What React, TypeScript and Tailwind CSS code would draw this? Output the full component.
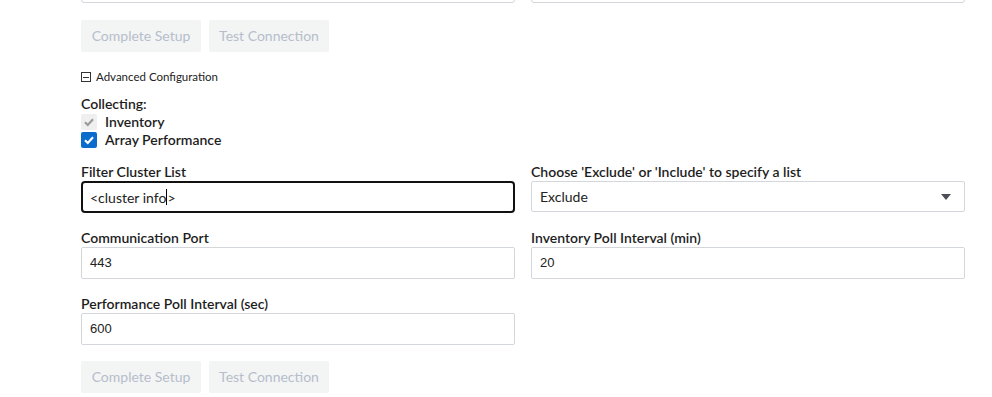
import React from "react";

const font = { fontFamily: "Lato, 'Open Sans', sans-serif" };

function Btns() {
  return (
    <div className="flex gap-2">
      <div className="w-[120px] h-[32px] rounded-[2px] bg-[#f3f4f4] text-[#b6becb] text-[14px] flex items-center justify-center pb-[1px]">
        Complete Setup
      </div>
      <div className="w-[120px] h-[32px] rounded-[2px] bg-[#f3f4f4] text-[#b6becb] text-[14px] flex items-center justify-center pb-[1px]">
        Test Connection
      </div>
    </div>
  );
}

function Label({ children }: { children: React.ReactNode }) {
  return <div className="h-[18px] leading-[18px] text-[14px] font-semibold text-[#1d1d1d]">{children}</div>;
}

function TextBox({ value, arial }: { value: string; arial?: boolean }) {
  return (
    <div
      className="h-[32px] border border-[#d3d6da] rounded-[2px] px-[8px] flex items-center text-[14px] text-[#222]"
      style={arial ? { fontFamily: "'Liberation Sans', Arial, sans-serif", fontSize: 13 } : undefined}
    >
      {value}
    </div>
  );
}

export default function App() {
  return (
    <div className="w-[992px] h-[397px] bg-white overflow-hidden" style={font}>
      <div className="pl-[81px] w-[965px]">
        <div className="grid grid-cols-2 gap-x-4 -mt-[29px]">
          <div className="h-[32px] border border-[#d3d6da] rounded-[3px]" />
          <div className="h-[32px] border border-[#d3d6da] rounded-[3px]" />
        </div>
        <div className="mt-[17px]">
          <Btns />
        </div>
        <div className="mt-[17px] h-[16px] flex items-center gap-[5px] text-[11.5px] text-[#222]">
          <div className="w-[10px] h-[10px] border border-[#333] relative flex items-center justify-center">
            <div className="w-[6px] h-[1px] bg-[#333]" />
          </div>
          <span>Advanced Configuration</span>
        </div>
        <div className="mt-[10px] text-[14px] font-semibold text-[#1d1d1d]">
          <div className="h-[18px] leading-[18px]">Collecting:</div>
          <div className="h-[18px] leading-[18px] flex items-center gap-[8px]">
            <div className="w-[16px] h-[16px] rounded-[2px] bg-[#efefef] flex items-center justify-center">
              <svg width="12" height="12" viewBox="0 0 12 12">
                <path d="M2 6.2 L4.8 9 L10 3.2" stroke="#9a9a9a" strokeWidth="2.2" fill="none" />
              </svg>
            </div>
            <span>Inventory</span>
          </div>
          <div className="h-[18px] leading-[18px] flex items-center gap-[8px]">
            <div className="w-[16px] h-[16px] rounded-[2px] bg-[#0b6ccb] flex items-center justify-center">
              <svg width="12" height="12" viewBox="0 0 12 12">
                <path d="M2 6.2 L4.8 9 L10 3.2" stroke="#ffffff" strokeWidth="2.2" fill="none" />
              </svg>
            </div>
            <span>Array Performance</span>
          </div>
        </div>
        <div className="grid grid-cols-2 gap-x-4 mt-[14px]">
          <div>
            <Label>Filter Cluster List</Label>
            <div className="h-[32px] border-2 border-[#111] rounded-[4px] px-[7px] flex items-center text-[14px] text-[#222]">
              <span>&lt;cluster info</span>
              <span className="w-[1px] h-[16px] bg-black" />
              <span>&gt;</span>
            </div>
          </div>
          <div>
            <Label>Choose 'Exclude' or 'Include' to specify a list</Label>
            <div className="h-[31px] border border-[#d3d6da] rounded-[2px] px-[8px] flex items-center justify-between text-[14px] text-[#222]">
              <span>Exclude</span>
              <svg width="10" height="6" viewBox="0 0 10 6" className="mr-[5px]">
                <path d="M0 0 H10 L5 6 Z" fill="#4a4f55" />
              </svg>
            </div>
          </div>
        </div>
        <div className="grid grid-cols-2 gap-x-4 mt-[16px]">
          <div>
            <Label>Communication Port</Label>
            <TextBox value="443" arial />
          </div>
          <div>
            <Label>Inventory Poll Interval (min)</Label>
            <TextBox value="20" arial />
          </div>
        </div>
        <div className="grid grid-cols-2 gap-x-4 mt-[16px]">
          <div>
            <Label>Performance Poll Interval (sec)</Label>
            <TextBox value="600" arial />
          </div>
          <div />
        </div>
        <div className="mt-[16px]">
          <Btns />
        </div>
      </div>
    </div>
  );
}
